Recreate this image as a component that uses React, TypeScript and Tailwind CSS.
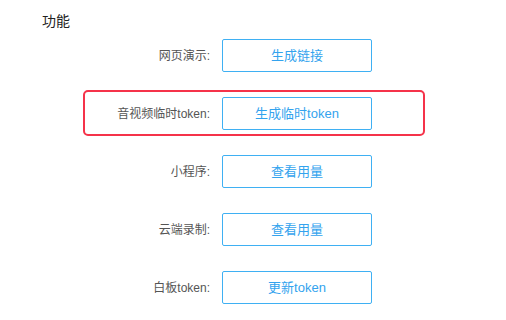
const rows = [
  { label: '网页演示:', action: '生成链接' },
  { label: '音视频临时token:', action: '生成临时token', highlight: true },
  { label: '小程序:', action: '查看用量' },
  { label: '云端录制:', action: '查看用量' },
  { label: '白板token:', action: '更新token' },
]

export default function App() {
  return (
    <div
      className="w-[506px] h-[320px] bg-white overflow-hidden"
      style={{ fontFamily: '"Liberation Sans", "Noto Sans CJK SC", sans-serif' }}
    >
      <div className="pl-[42px] pt-[12px] text-[14px] leading-[18px] text-[#222]">功能</div>
      <div className="mt-[9px] flex flex-col gap-[25px]">
        {rows.map((row) => (
          <div key={row.label} className="relative flex items-center h-[33px]">
            {row.highlight && (
              <div className="absolute left-[83px] w-[342px] -top-[7px] -bottom-[6px] border-2 border-[#f5334a] rounded-[5px] pointer-events-none" />
            )}
            <div className="w-[210px] text-right text-[12px] text-[#555]">{row.label}</div>
            <button className="ml-[12px] w-[150px] h-[33px] border border-[#3fb0f3] rounded-[2px] bg-white text-[13px] text-[#33a3ee]">
              {row.action}
            </button>
          </div>
        ))}
      </div>
    </div>
  )
}
